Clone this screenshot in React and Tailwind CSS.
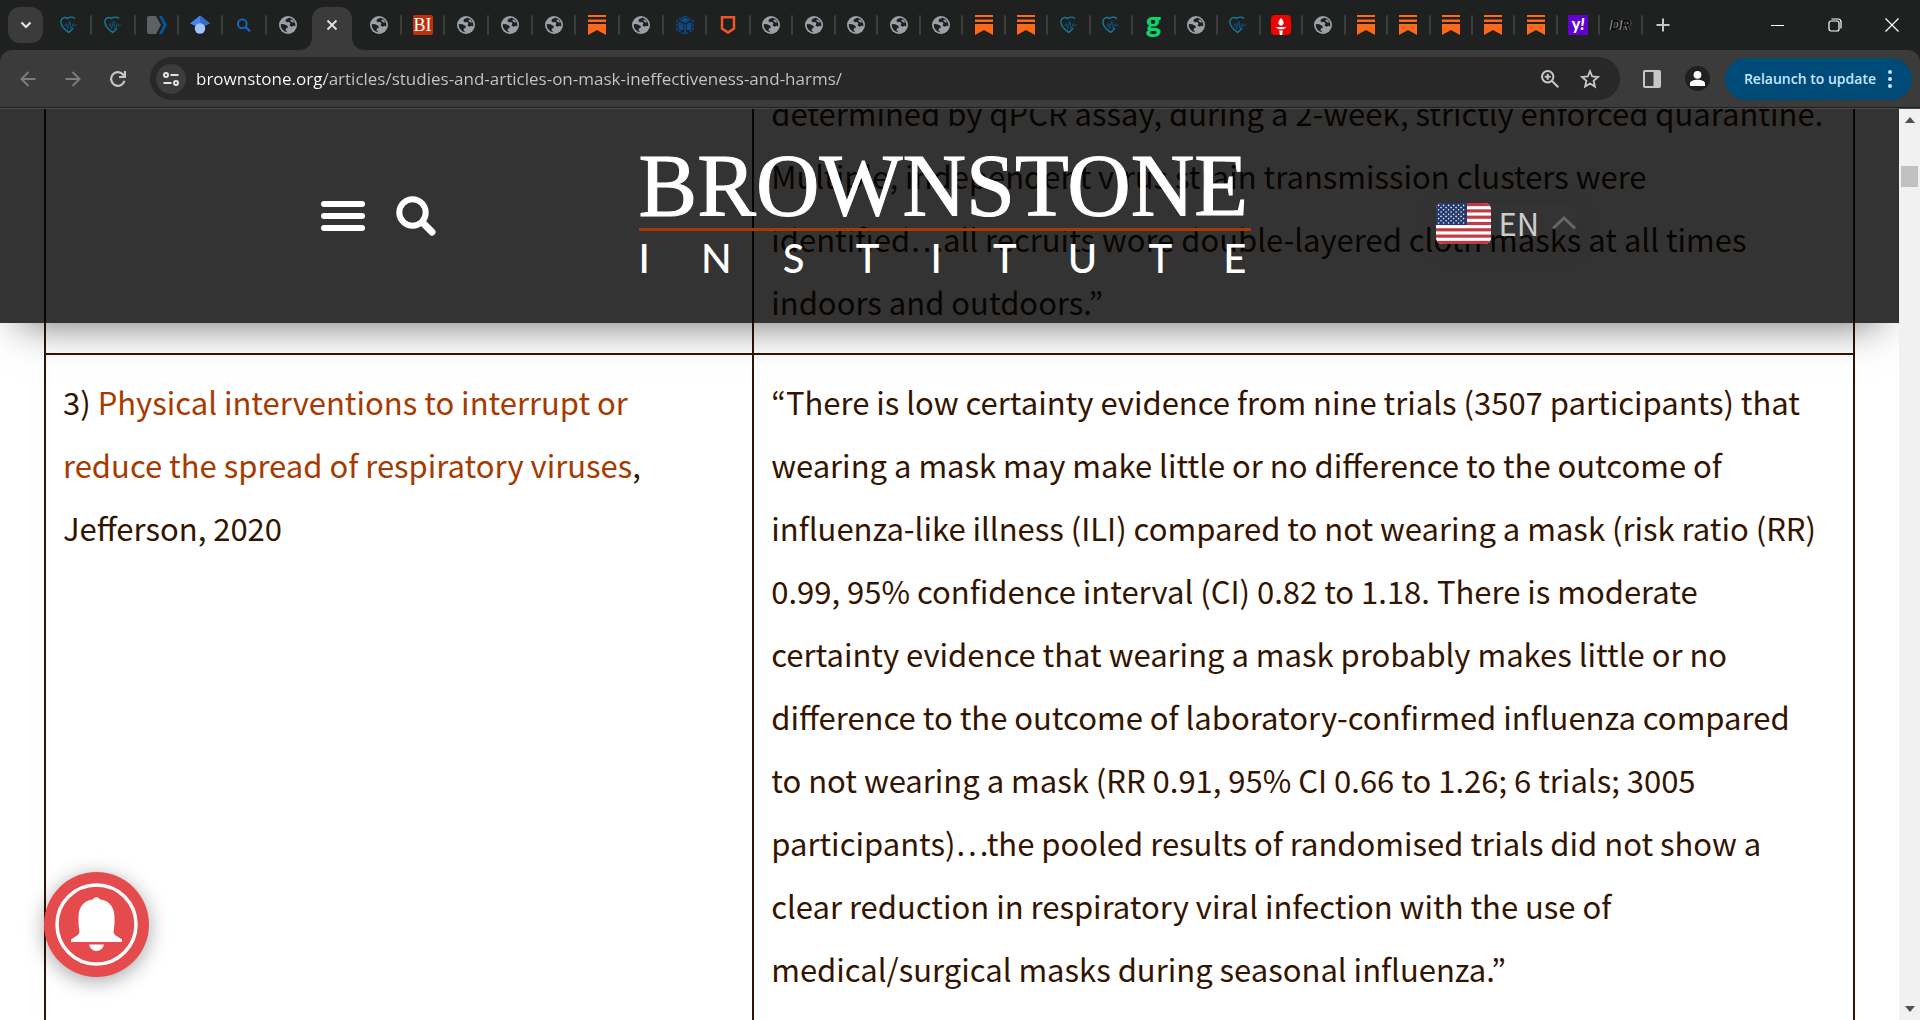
import { Fragment } from "react";

const firstTabs = ["heart", "heart", "tag", "scholar", "search", "globe"];

const middleTabs = ["globe", "bi", "globe", "globe", "globe", "substack", "globe", "cube", "shield"];

const lastTabs = [
  "globe", "globe", "globe", "globe", "globe", "substack", "substack",
  "heart", "heart", "goodreads", "globe", "heart", "torch", "globe",
  "substack", "substack", "substack", "substack", "substack", "yahoo", "dr",
];

const previousStudy = [
  "determined by qPCR assay, during a 2-week, strictly enforced quarantine.",
  "Multiple, independent virus strain transmission clusters were",
  "identified…all recruits wore double-layered cloth masks at all times",
  "indoors and outdoors.”",
];

const currentStudy = [
  "“There is low certainty evidence from nine trials (3507 participants) that",
  "wearing a mask may make little or no difference to the outcome of",
  "influenza-like illness (ILI) compared to not wearing a mask (risk ratio (RR)",
  "0.99, 95% confidence interval (CI) 0.82 to 1.18. There is moderate",
  "certainty evidence that wearing a mask probably makes little or no",
  "difference to the outcome of laboratory-confirmed influenza compared",
  "to not wearing a mask (RR 0.91, 95% CI 0.66 to 1.26; 6 trials; 3005",
  "participants)…the pooled results of randomised trials did not show a",
  "clear reduction in respiratory viral infection with the use of",
  "medical/surgical masks during seasonal influenza.”",
];

function Favicon({ kind }) {
  if (kind === "bi") {
    return (
      <span className="flex h-5 w-5 items-center justify-center rounded-xs bg-[#c22f0c] font-['Liberation_Serif',serif] text-lg leading-5 text-white">
        BI
      </span>
    );
  }
  if (kind === "goodreads") {
    return <span className="pb-2 font-['Lato',sans-serif] text-[29px] leading-5 font-black text-[#0ad66b]">g</span>;
  }
  if (kind === "yahoo") {
    return (
      <span className="flex h-5 w-5 items-center justify-center bg-[#6001d2] pb-0.5 font-['Lato',sans-serif] text-base leading-5 font-black text-white">
        y<i>!</i>
      </span>
    );
  }
  if (kind === "dr") {
    return (
      <span className="font-['Liberation_Sans',sans-serif] text-sm leading-5 font-bold text-[#080808] italic [text-shadow:-1px_0_#a0a0a0,1px_0_#5a5a5a]">
        DR
      </span>
    );
  }
  return (
    <svg viewBox="0 0 20 20" className="h-5 w-5" fill="none" aria-hidden="true">
      {kind === "globe" && (
        <>
          <circle cx="10" cy="10" r="9" fill="#9aa0a6" />
          <path
            d="M11.2 2.8 8 4.2 7.4 6.3 9 7.3 11.4 7.1 12.4 8.6 11.5 10.4 13.5 11.8 15.8 10.8 17.2 11.6A7.4 7.4 0 0 0 11.2 2.8Z"
            fill="#1f2120"
          />
          <path
            d="M2.8 9 6.3 9.3 9.7 11.1 9.6 13 7.8 13.6 7.6 15.3 9.5 17.3A7.3 7.3 0 0 1 2.8 9Z"
            fill="#1f2120"
          />
          <path d="M12 5.4 14.5 7.4 16.3 7.2 14 4.5Z" fill="#9aa0a6" />
        </>
      )}
      {kind === "heart" && (
        <>
          <path
            d="M16 3.5C13 1.3 10 2.2 8.7 3.6 5.8 1.3 2 3 1.8 6.6 1.7 10.8 6 15 9.6 17.4 11.6 16 13 14.7 14 13.4"
            stroke="#187f9f"
            strokeWidth="1.3"
          />
          <path d="M5.5 11.2 7.4 8.4 8.6 13.6 10.7 6 12.2 14.4 14.3 8.6 15.7 11 18 9.6" stroke="#07558c" strokeWidth="1" />
        </>
      )}
      {kind === "tag" && (
        <>
          <path d="M2 1H9L14 10 9 19H2Q0 19 0 17V3Q0 1 2 1Z" fill="#5f6064" />
          <path d="M12 1H15L20 10 15 19H12L16.5 10Z" fill="#07559c" />
        </>
      )}
      {kind === "scholar" && (
        <>
          <path d="M10 .5 20 8.5 10 13 0 8.5Z" fill="#4285f4" />
          <path d="M10 .5 20 8.5 14 10.5 10 7Z" fill="#356ac3" />
          <circle cx="10" cy="13.5" r="5.2" fill="#a0c3ff" />
        </>
      )}
      {kind === "search" && (
        <>
          <circle cx="8.3" cy="8.7" r="4.4" stroke="#1070c8" strokeWidth="1.8" />
          <path d="m11.6 12 4.4 4.2" stroke="#1070c8" strokeWidth="2" />
        </>
      )}
      {kind === "substack" && <path d="M1 0H19V2H1ZM1 4.5H19V7H1ZM1 9H19V20L10 15 1 20Z" fill="#ff6719" />}
      {kind === "cube" && (
        <>
          <path d="m10 1 8 4.5v9.3L10 19.3 2 14.8V5.5Z" stroke="#0c4c93" strokeWidth="1.2" strokeDasharray="3 1" />
          <path d="m10 2.6 5 3-5 2.5-5-2.5Z" fill="#0c4c93" />
          <path d="M4.5 15V8l3 1.5v5.5M12.5 15V9.5l3-1.5v7M10 9v9M6 10v5M14 10v5" stroke="#0c4c93" strokeWidth="1.5" />
        </>
      )}
      {kind === "shield" && <path d="M4 2.2H16V13.5L10 17.5 4 13.5Z" stroke="#f0562a" strokeWidth="2.5" />}
      {kind === "torch" && (
        <>
          <rect width="20" height="20" rx="4" fill="#ee0202" />
          <path d="M10 3Q15 8 11 10.5H9Q5 8 10 3ZM4.5 12H15.5L12.5 14.2H7.5ZM8.3 15.5H11.7L11.2 20H8.8Z" fill="#fff" />
        </>
      )}
    </svg>
  );
}

function TabGroup({ tabs, className, openEnd }) {
  return (
    <div className={`flex items-center ${className}`}>
      {tabs.map((kind, i) => (
        <button key={i} type="button" className="relative flex h-9 min-w-0 flex-1 items-center justify-center">
          <Favicon kind={kind} />
          {!(openEnd && i === tabs.length - 1) && (
            <span className="absolute -right-px h-5 w-0.5 rounded-full bg-[#3c3d3d]" />
          )}
        </button>
      ))}
    </div>
  );
}

function TabStrip() {
  return (
    <div className="flex h-[50px] shrink-0 items-center bg-[#1f2120] pl-2">
      <button
        type="button"
        aria-label="Search tabs"
        className="mr-1 flex h-9 w-[35px] shrink-0 items-center justify-center rounded-xl bg-[#3b3b3b]"
      >
        <svg viewBox="0 0 12 8" className="h-2 w-3" fill="none" stroke="#e3e3e3" strokeWidth="2.2">
          <path d="m1.5 1.5 4.5 4.5 4.5-4.5" />
        </svg>
      </button>
      <TabGroup tabs={firstTabs} className="w-[263px]" openEnd />
      <div className="relative flex h-full w-[47px] items-end pl-0.5">
        <button
          type="button"
          aria-label="Close tab"
          className="flex h-[43px] w-10 items-center justify-center rounded-t-xl bg-[#3b3b3b] pb-2"
        >
          <svg viewBox="0 0 12 12" className="h-3 w-3" stroke="#e3e3e3" strokeWidth="1.8">
            <path d="m1.5 1.5 9 9m0-9-9 9" />
          </svg>
        </button>
        <svg viewBox="0 0 14 14" className="absolute bottom-0 -left-3 h-3.5 w-3.5" fill="#3b3b3b">
          <path d="M14 0v14H0Q14 14 14 0Z" />
        </svg>
        <svg viewBox="0 0 14 14" className="absolute -right-[9px] bottom-0 h-3.5 w-3.5" fill="#3b3b3b">
          <path d="M0 0v14H14Q0 14 0 0Z" />
        </svg>
      </div>
      <TabGroup tabs={middleTabs} className="w-[393px]" />
      <TabGroup tabs={lastTabs} className="w-[892px]" />
      <button type="button" aria-label="New tab" className="flex w-[42px] items-center justify-center">
        <svg viewBox="0 0 14 14" className="h-3.5 w-3.5" stroke="#c7c7c7" strokeWidth="2">
          <path d="M7 .5v13M.5 7h13" />
        </svg>
      </button>
      <div className="ml-auto flex h-full items-center">
        <button type="button" aria-label="Minimize" className="flex h-full w-[57px] items-center justify-center">
          <span className="h-px w-[13px] bg-white" />
        </button>
        <button type="button" aria-label="Restore" className="flex h-full w-[57px] items-center justify-center">
          <svg viewBox="0 0 14 14" className="h-3.5 w-3.5" fill="none" stroke="#fff" strokeWidth="1.2">
            <rect x="1" y="3" width="10" height="10" rx="2" />
            <path d="M3.5 1H10a3 3 0 0 1 3 3v6.5" />
          </svg>
        </button>
        <button type="button" aria-label="Close" className="flex h-full w-[57px] items-center justify-center">
          <svg viewBox="0 0 14 14" className="h-3.5 w-3.5" stroke="#fff" strokeWidth="1.2">
            <path d="m.5.5 13 13m0-13-13 13" />
          </svg>
        </button>
      </div>
    </div>
  );
}

function Toolbar() {
  return (
    <div className="shrink-0 bg-[#1f2120]">
      <div className="flex h-[57px] items-center rounded-t-xl bg-[#3b3b3b] pr-2 pl-[5px]">
        <button type="button" aria-label="Back" className="flex w-[45px] justify-center">
          <svg viewBox="0 0 16 16" className="h-4 w-4" fill="none" stroke="#7c7c7c" strokeWidth="2">
            <path d="M15.5 8H2M8.5 1 1.5 8l7 7" />
          </svg>
        </button>
        <button type="button" aria-label="Forward" className="flex w-[45px] justify-center">
          <svg viewBox="0 0 16 16" className="h-4 w-4" fill="none" stroke="#7c7c7c" strokeWidth="2">
            <path d="M.5 8H14M7.5 1l7 7-7 7" />
          </svg>
        </button>
        <button type="button" aria-label="Reload" className="mr-2.5 flex w-[45px] justify-center">
          <svg viewBox="0 0 16 16" className="h-4 w-4" fill="none" stroke="#c7c7c7" strokeWidth="2.2">
            <path d="M14.5 9.8A6.8 6.8 0 1 1 13 3.4L14.8 5.5" />
            <path d="M15 0v6H9" />
          </svg>
        </button>
        <div className="flex h-[43px] min-w-0 flex-1 items-center rounded-full bg-[#282828] pl-1.5">
          <button
            type="button"
            aria-label="View site information"
            className="mr-2.5 flex h-[30px] w-[30px] shrink-0 items-center justify-center rounded-full bg-[#3c3c3c]"
          >
            <svg viewBox="0 0 16 14" className="h-3.5 w-4" fill="none" stroke="#e3e3e3" strokeWidth="2">
              <circle cx="3" cy="3" r="2" />
              <path d="M7.5 3H15.5M.5 11H8.5" />
              <circle cx="13" cy="11" r="2" />
            </svg>
          </button>
          <input
            type="text"
            aria-label="Address"
            defaultValue="brownstone.org/articles/studies-and-articles-on-mask-ineffectiveness-and-harms/"
            className="h-8 min-w-0 flex-1 bg-[linear-gradient(90deg,#ffffff_129px,#c7c7c7_129px)] bg-clip-text font-['Open_Sans',sans-serif] text-[17px] text-transparent outline-none"
          />
          <button type="button" aria-label="Zoom" className="flex w-10 justify-center">
            <svg viewBox="0 0 18 18" className="h-[18px] w-[18px]" fill="none" stroke="#c7c7c7" strokeWidth="2">
              <circle cx="6.7" cy="6.7" r="5.7" />
              <path d="m11 11 6.3 6.3M6.7 3.7v6M3.7 6.7h6" />
            </svg>
          </button>
          <button type="button" aria-label="Bookmark" className="mr-2.5 flex w-10 justify-center">
            <svg viewBox="0 0 20 20" className="h-5 w-5" fill="none" stroke="#c7c7c7" strokeWidth="1.8">
              <path d="m10 2.2 2.2 5.3 5.8.5-4.4 3.8 1.3 5.7-4.9-3-4.9 3 1.3-5.7L2 8l5.8-.5Z" />
            </svg>
          </button>
        </div>
        <button type="button" aria-label="Side panel" className="ml-[23px]">
          <svg viewBox="0 0 18 18" className="h-[18px] w-[18px]">
            <rect x="1" y="1" width="16" height="16" rx="1" fill="none" stroke="#c7c7c7" strokeWidth="2" />
            <path d="M10.5 1H17v16h-6.5Z" fill="#c7c7c7" />
          </svg>
        </button>
        <button type="button" aria-label="Profile" className="mr-[15px] ml-6 h-[25px] w-[25px] rounded-full bg-[#1f2120]">
          <svg viewBox="0 0 25 25" fill="#fff">
            <circle cx="12.5" cy="8.8" r="3.9" />
            <path d="M5 20v-2.5c0-5 15-5 15 0V20Z" />
          </svg>
        </button>
        <button
          type="button"
          className="flex h-[42px] items-center gap-3 rounded-full bg-[#004a77] pr-5 pl-[19px] font-['Open_Sans',sans-serif] text-sm font-semibold text-[#c2e7ff]"
        >
          Relaunch to update
          <svg viewBox="0 0 4 18" className="h-[18px] w-1" fill="#c2e7ff">
            <circle cx="2" cy="2" r="2" />
            <circle cx="2" cy="9" r="2" />
            <circle cx="2" cy="16" r="2" />
          </svg>
        </button>
      </div>
      <div className="h-0.5 border-b border-[#4a4a4a] bg-[#1f2120]" />
    </div>
  );
}

function Flag() {
  const stars = [];
  for (let row = 0; row < 9; row++) {
    for (let col = 0; col < (row % 2 ? 5 : 6); col++) {
      stars.push(<circle key={`${row}-${col}`} cx={2.6 + col * 5 + (row % 2 ? 2.5 : 0)} cy={2.4 + row * 2.2} r="0.8" />);
    }
  }
  return (
    <svg viewBox="0 0 55 41" className="h-[41px] w-[55px] rounded-md" preserveAspectRatio="none" aria-hidden="true">
      <rect width="55" height="41" fill="#fff" />
      {[0, 1, 2, 3, 4, 5, 6].map((n) => (
        <rect key={n} y={n * 6.308} width="55" height="3.154" fill="#c03b42" />
      ))}
      <rect width="31" height="22" fill="#223a70" />
      <g fill="#fff">{stars}</g>
    </svg>
  );
}

function SiteHeader() {
  return (
    <header className="absolute inset-x-0 top-0 grid h-[214px] grid-cols-[1fr_612px_1fr] bg-black/80 pr-2.5 shadow-[0_20px_40px_-20px_rgba(0,0,0,0.6)]">
      <div className="flex items-center justify-end gap-[31px] pr-[203px]">
        <button type="button" aria-label="Menu" className="flex w-11 flex-col gap-1.5">
          <span className="h-1.5 rounded-full bg-white" />
          <span className="h-1.5 rounded-full bg-white" />
          <span className="h-1.5 rounded-full bg-white" />
        </button>
        <button type="button" aria-label="Search">
          <svg viewBox="0 0 40 40" className="h-10 w-10" fill="none" stroke="#fff">
            <circle cx="16.5" cy="16.5" r="13.2" strokeWidth="6" />
            <path d="m27.5 27.5 8.5 8.5" strokeWidth="7" strokeLinecap="round" />
          </svg>
        </button>
      </div>
      <a href="#home" className="flex flex-col pt-[34px] text-white">
        <span className="font-['Liberation_Serif',serif] text-[88px] leading-[85px] whitespace-nowrap [-webkit-text-stroke:1px_white]">
          BROWNSTONE
        </span>
        <span className="h-[3px] bg-[#a63a00]" />
        <span className="flex justify-between pt-[7px] pr-1 font-['Lato',sans-serif] text-[40px] leading-10 font-medium">
          {"INSTITUTE".split("").map((letter, i) => (
            <span key={i}>{letter}</span>
          ))}
        </span>
      </a>
      <div className="flex items-center pt-3.5 pl-[185px]">
        <button type="button" className="flex items-center shadow-[0_4px_24px_rgba(0,0,0,0.1)]">
          <Flag />
          <span className="pr-3 pl-2 font-['Noto_Sans_CJK_KR',sans-serif] text-[31px] leading-10 text-[#cccccc]">EN</span>
          <svg viewBox="0 0 26 14" className="h-3.5 w-[26px]" fill="none" stroke="#666" strokeWidth="3">
            <path d="M2 12.5 13 2l11 10.5" />
          </svg>
        </button>
      </div>
    </header>
  );
}

function Lines({ lines }) {
  return lines.map((line) => (
    <Fragment key={line}>
      {line}
      <br />
    </Fragment>
  ));
}

function StudyTable() {
  return (
    <div className="px-11">
      <table className="-mt-7 w-full table-fixed border-collapse font-['Noto_Sans_CJK_KR',sans-serif] text-[31px] leading-[63px] text-[#331400]">
        <colgroup>
          <col className="w-[39.15%]" />
          <col />
        </colgroup>
        <tbody>
          <tr className="border-b-2 border-[#331400] align-top">
            <td className="border-x-2 border-[#331400]" />
            <td className="border-x-2 border-[#331400] px-[17px] pb-5 whitespace-nowrap">
              <Lines lines={previousStudy} />
            </td>
          </tr>
          <tr className="border-b-2 border-[#331400] align-top">
            <td className="border-x-2 border-[#331400] px-[17px] pt-[15px]">
              3){" "}
              <a href="#jefferson-2020" className="text-[#a63a00]">
                Physical interventions to interrupt or
                <br />
                reduce the spread of respiratory viruses
              </a>
              ,<br />
              Jefferson, 2020
            </td>
            <td className="border-x-2 border-[#331400] px-[17px] pt-[15px] pb-8 whitespace-nowrap">
              <Lines lines={currentStudy} />
            </td>
          </tr>
        </tbody>
      </table>
    </div>
  );
}

function NotificationBell() {
  return (
    <button
      type="button"
      aria-label="Subscribe to notifications"
      className="absolute bottom-[43px] left-11 h-[105px] w-[105px] rounded-full bg-[#e54b4d] shadow-[0_4px_20px_rgba(0,0,0,0.35)]"
    >
      <svg viewBox="0 0 105 105" fill="#fff">
        <circle cx="52.5" cy="52.5" r="39.5" fill="none" stroke="#fff" strokeWidth="3.5" />
        <path d="M48.5 27.5q4-4.5 8 0C66 29 70.5 36 70.5 45v7l-1 8.5q.5 2 4 4l4.5 3v2.5H27v-2.5l4.5-3q3.5-2 4-4l-1-8.500v-7C34.5 36 39 29 48.5 27.5Z" />
        <path d="M45 72.5H60Q58.5 79 52.5 79T45 72.5Z" />
      </svg>
    </button>
  );
}

function Scrollbar() {
  return (
    <div className="flex w-[21px] shrink-0 flex-col items-center bg-[#f1f1f1] py-2">
      <svg viewBox="0 0 10 6" className="h-1.5 w-2.5" fill="#505050">
        <path d="M0 6 5 0l5 6Z" />
      </svg>
      <div className="mt-[43px] h-[21px] w-[17px] bg-[#c1c1c1]" />
      <svg viewBox="0 0 10 6" className="mt-auto h-1.5 w-2.5" fill="#505050">
        <path d="m0 0 5 6 5-6Z" />
      </svg>
    </div>
  );
}

export default function App() {
  return (
    <div className="flex h-screen flex-col overflow-hidden bg-white">
      <TabStrip />
      <Toolbar />
      <div className="flex min-h-0 flex-1">
        <main className="relative min-w-0 flex-1 overflow-hidden">
          <StudyTable />
          <SiteHeader />
          <NotificationBell />
        </main>
        <Scrollbar />
      </div>
    </div>
  );
}
